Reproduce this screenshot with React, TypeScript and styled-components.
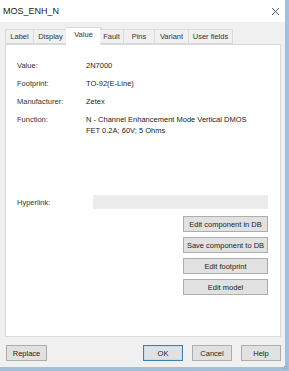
import React from 'react'
import styled, { createGlobalStyle } from 'styled-components'

const GlobalStyle = createGlobalStyle`
  html, body {
    margin: 0;
    padding: 0;
    background: #a3bfd9;
  }
  body {
    font-family: 'Liberation Sans', Arial, sans-serif;
    color: #222;
  }
`

const Frame = styled.div`
  width: 289px;
  height: 371px;
  box-sizing: border-box;
  padding: 0 4px 4px 0;
  background: #a3bfd9;
  position: relative;
`

const Window = styled.div`
  width: 285px;
  height: 367px;
  display: flex;
  flex-direction: column;
  background: #f0f0f0;
`

const TitleBar = styled.div`
  height: 22px;
  flex: none;
  display: flex;
  align-items: center;
  justify-content: space-between;
  padding: 0 5px 0 3px;
  background: #fff;
  font-size: 9px;
  color: #1a1a1a;
`

const Body = styled.div`
  flex: 1;
  display: flex;
  flex-direction: column;
  padding: 5px 4px 0 5px;
`

const TabRow = styled.div`
  height: 17px;
  display: flex;
  align-items: flex-end;
  position: relative;
  z-index: 1;
`

const Tab = styled.div<{ $w: number; $active?: boolean }>`
  box-sizing: border-box;
  width: ${({ $w, $active }) => ($active ? $w + 4 : $w)}px;
  margin: 0 ${({ $active }) => ($active ? -2 : 0)}px
    ${({ $active }) => ($active ? -1 : 0)}px;
  height: ${({ $active }) => ($active ? 18 : 15)}px;
  display: flex;
  align-items: ${({ $active }) => ($active ? 'flex-start' : 'center')};
  justify-content: center;
  padding-top: ${({ $active }) => ($active ? 2 : 0)}px;
  font-size: 7.5px;
  color: #333;
  background: ${({ $active }) => ($active ? '#fff' : '#f0f0f0')};
  border: 1px solid #d9d9d9;
  border-bottom: ${({ $active }) => ($active ? 'none' : '1px solid #d9d9d9')};
  & + & {
    border-left: ${({ $active }) => ($active ? '1px solid #d9d9d9' : 'none')};
  }
`

const Panel = styled.div`
  height: 293px;
  box-sizing: border-box;
  background: #fff;
  border: 1px solid #d9d9d9;
  padding: 15px 12px 0 11px;
  display: flex;
  flex-direction: column;
  font-size: 7.5px;
  line-height: 11px;
`

const Fields = styled.div`
  display: grid;
  grid-template-columns: 69px 1fr;
  row-gap: 7px;
`

const FieldLabel = styled.div`
  color: #333;
`

const FieldValue = styled.div`
  color: #222;
`

const LinkRow = styled.div`
  margin-top: 59px;
  display: flex;
  align-items: center;
  height: 14px;
`

const LinkLabel = styled.div`
  width: 76px;
  color: #333;
`

const LinkInput = styled.div`
  flex: 1;
  height: 14px;
  background: #ececec;
`

const SideButtons = styled.div`
  margin-top: 7px;
  align-self: flex-end;
  display: flex;
  flex-direction: column;
  gap: 5px;
`

const Button = styled.div<{ $w?: number; $default?: boolean }>`
  box-sizing: border-box;
  width: ${({ $w }) => $w ?? 85}px;
  height: 16px;
  display: flex;
  align-items: center;
  justify-content: center;
  font-size: 7.5px;
  color: #222;
  background: #e1e1e1;
  border: 1px solid ${({ $default }) => ($default ? '#3c7fb1' : '#adadad')};
  box-shadow: ${({ $default }) => ($default ? 'inset 0 0 0 1px #c7dcef' : 'none')};
  white-space: nowrap;
`

const Footer = styled.div`
  margin-top: 8px;
  display: flex;
  align-items: center;
  padding-left: 1px;
`

const FooterRight = styled.div`
  margin-left: auto;
  display: flex;
  gap: 9px;
`

const Grip = styled.svg`
  position: absolute;
  right: 1px;
  bottom: 1px;
`

const tabs: [string, number][] = [
  ['Label', 29],
  ['Display', 34],
  ['Value', 32],
  ['Fault', 24],
  ['Pins', 31],
  ['Variant', 34],
  ['User fields', 44],
]

const fields: [string, React.ReactNode][] = [
  ['Value:', '2N7000'],
  ['Footprint:', 'TO-92(E-Line)'],
  ['Manufacturer:', 'Zetex'],
  [
    'Function:',
    <>
      N - Channel Enhancement Mode Vertical DMOS
      <br />
      FET 0.2A; 60V; 5 Ohms
    </>,
  ],
]

const App: React.FC = () => {
  return (
    <>
      <GlobalStyle />
      <Frame>
        <Window>
          <TitleBar>
            <span>MOS_ENH_N</span>
            <svg width="9" height="9" viewBox="0 0 9 9">
              <path d="M1 1 L8 8 M8 1 L1 8" stroke="#444" strokeWidth="0.9" fill="none" />
            </svg>
          </TitleBar>
          <Body>
            <TabRow>
              {tabs.map(([name, w]) => (
                <Tab key={name} $w={w} $active={name === 'Value'}>
                  {name}
                </Tab>
              ))}
            </TabRow>
            <Panel>
              <Fields>
                {fields.map(([label, value]) => (
                  <React.Fragment key={label}>
                    <FieldLabel>{label}</FieldLabel>
                    <FieldValue>{value}</FieldValue>
                  </React.Fragment>
                ))}
              </Fields>
              <LinkRow>
                <LinkLabel>Hyperlink:</LinkLabel>
                <LinkInput />
              </LinkRow>
              <SideButtons>
                <Button>Edit component in DB</Button>
                <Button>Save component to DB</Button>
                <Button>Edit footprint</Button>
                <Button>Edit model</Button>
              </SideButtons>
            </Panel>
            <Footer>
              <Button $w={41}>Replace</Button>
              <FooterRight>
                <Button $w={40} $default>
                  OK
                </Button>
                <Button $w={40}>Cancel</Button>
                <Button $w={40}>Help</Button>
              </FooterRight>
            </Footer>
          </Body>
        </Window>
        <Grip width="6" height="6" viewBox="0 0 6 6">
          <rect x="4" y="0" width="1" height="1" fill="#8aa3b8" />
          <rect x="2" y="2" width="1" height="1" fill="#8aa3b8" />
          <rect x="4" y="2" width="1" height="1" fill="#8aa3b8" />
          <rect x="0" y="4" width="1" height="1" fill="#8aa3b8" />
          <rect x="2" y="4" width="1" height="1" fill="#8aa3b8" />
          <rect x="4" y="4" width="1" height="1" fill="#8aa3b8" />
        </Grip>
      </Frame>
    </>
  )
}

export default App
